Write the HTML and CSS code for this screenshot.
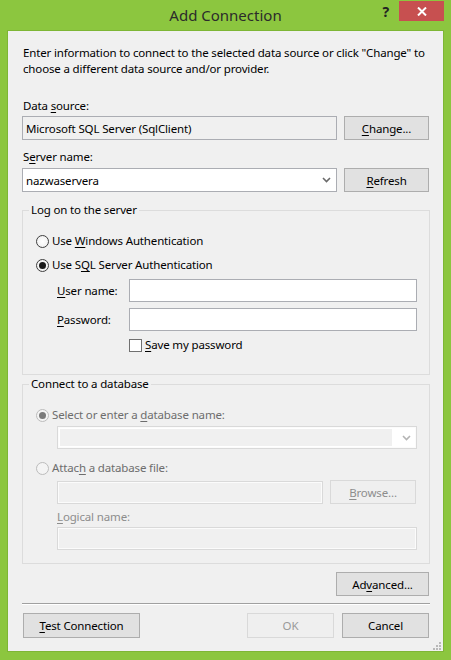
FILE: index.html
```html
<!DOCTYPE html>
<html>
<head>
<meta charset="utf-8">
<title>Add Connection</title>
<link rel="stylesheet" href="styles.css">
</head>
<body>
<div class="window">
  <div class="titlebar">
    <div class="title">Add Connection</div>
    <div class="help">?</div>
    <div class="close"><svg width="10" height="9" viewBox="0 0 10 9"><path d="M1 0.5 L9 8.5 M9 0.5 L1 8.5" stroke="#fff" stroke-width="2"/></svg></div>
  </div>
  <div class="client">
    <p class="intro">Enter information to connect to the selected data source or click "Change" to choose a different data source and/or provider.</p>

    <div class="label first">Data <u>s</u>ource:</div>
    <div class="row">
      <div class="field readonly">Microsoft SQL Server (SqlClient)</div>
      <div class="btn"><span><u>C</u>hange...</span></div>
    </div>

    <div class="label">S<u>e</u>rver name:</div>
    <div class="row">
      <div class="field combo"><span>nazwaservera</span><svg class="chev" width="9" height="6" viewBox="0 0 9 6"><path d="M1 1 L4.5 4.5 L8 1" fill="none" stroke="#6a6a6a" stroke-width="1.6"/></svg></div>
      <div class="btn"><span><u>R</u>efresh</span></div>
    </div>

    <fieldset class="group g1">
      <legend>Log on to the server</legend>
      <div class="opt o1"><span class="radio"></span><span>Use <u>W</u>indows Authentication</span></div>
      <div class="opt o2"><span class="radio on"></span><span>Use S<u>Q</u>L Server Authentication</span></div>
      <div class="creds">
        <div class="clabel"><u>U</u>ser name:</div>
        <div class="field"></div>
        <div class="clabel"><u>P</u>assword:</div>
        <div class="field"></div>
      </div>
      <div class="check"><span class="box"></span><span><u>S</u>ave my password</span></div>
    </fieldset>

    <fieldset class="group g2">
      <legend>Connect to a database</legend>
      <div class="opt o3 dis"><span class="radio on dis"></span><span>Select or enter a <u>d</u>atabase name:</span></div>
      <div class="field dfield dcombo"><span class="dinner"></span><svg class="chev" width="9" height="6" viewBox="0 0 9 6"><path d="M1 1 L4.5 4.5 L8 1" fill="none" stroke="#b4b4b4" stroke-width="1.6"/></svg></div>
      <div class="opt o4 dis"><span class="radio dis"></span><span>Attac<u>h</u> a database file:</span></div>
      <div class="filerow">
        <div class="field dfield"></div>
        <div class="btn dbtn"><span><u>B</u>rowse...</span></div>
      </div>
      <div class="llabel"><u>L</u>ogical name:</div>
      <div class="field dfield lfield"></div>
    </fieldset>

    <div class="advrow"><div class="btn adv"><span>Ad<u>v</u>anced...</span></div></div>
    <div class="sep"></div>
    <div class="bottom">
      <div class="btn test"><span><u>T</u>est Connection</span></div>
      <div class="spacer"></div>
      <div class="btn ok dbtn">OK</div>
      <div class="btn cancel">Cancel</div>
    </div>
    <svg class="grip" width="10" height="10" viewBox="0 0 10 10"><g fill="#b9b9b9"><rect x="7" y="1" width="2" height="2"/><rect x="4" y="4" width="2" height="2"/><rect x="7" y="4" width="2" height="2"/><rect x="1" y="7" width="2" height="2"/><rect x="4" y="7" width="2" height="2"/><rect x="7" y="7" width="2" height="2"/></g></svg>
  </div>
</div>
</body>
</html>
```

FILE: styles.css
```css
* { box-sizing: border-box; }
html, body { margin: 0; padding: 0; }
body {
  font-family: "Noto Sans", "Open Sans", "DejaVu Sans", sans-serif;
  font-size: 11.5px;
  letter-spacing: -0.15px;
  color: #000;
  background: #8cc63f;
}
u { text-decoration: underline; text-underline-offset: 2px; text-decoration-thickness: 1px; }

.window {
  width: 451px;
  height: 660px;
  background: #8cc63f;
  display: flex;
  flex-direction: column;
  padding: 0 8px 9px;
}

.titlebar {
  height: 31px;
  flex: none;
  display: grid;
  grid-template-columns: 1fr auto auto;
  align-items: start;
}
.title {
  grid-column: 1 / -1;
  grid-row: 1;
  text-align: center;
  font-size: 15px;
  letter-spacing: 0;
  line-height: 30px;
  color: #2b2b2b;
}
.help {
  grid-column: 2;
  grid-row: 1;
  font-weight: bold;
  font-size: 14px;
  line-height: 24px;
  color: #222;
  margin-right: 10px;
}
.close {
  grid-column: 3;
  grid-row: 1;
  width: 45px;
  height: 20px;
  margin-top: 1px;
  margin-right: -1px;
  background: #c75050;
  display: flex;
  align-items: center;
  justify-content: center;
}

.client {
  flex: 1;
  position: relative;
  background: #f0f0f0;
  box-shadow: 0 0 0 1px #7eb635;
  padding: 14px 14px 0;
  display: flex;
  flex-direction: column;
}

.intro {
  margin: 0 0 0 1px;
  line-height: 16px;
}

.label {
  line-height: 16px;
  margin: 9px 0 3px 1px;
}
.label.first { margin-top: 21px; margin-bottom: 2px; }

.row {
  display: grid;
  grid-template-columns: 315px 85px;
  column-gap: 7px;
  height: 24px;
}

.field {
  height: 100%;
  border: 1px solid #abadb3;
  background: #fff;
  padding: 0 3px;
  display: flex;
  align-items: center;
  white-space: nowrap;
}
.field.readonly { background: #f0f0f0; }
.combo { justify-content: space-between; padding-right: 5px; }

.btn {
  border: 1px solid #adadad;
  background: #e1e1e1;
  display: flex;
  align-items: center;
  justify-content: center;
  white-space: nowrap;
}
.dbtn {
  border-color: #d9d9d9;
  background: #efefef;
  color: #9a9a9a;
}

.group {
  margin: 10px 0 0;
  padding: 0 12px 0 13px;
  border: 1px solid #dcdcdc;
  border-radius: 0;
  min-width: 0;
  margin-right: -1px;
}
.group legend {
  line-height: 16px;
  padding: 0 2px;
  margin-left: -7px;
}
.g1 { padding-bottom: 21px; }
.g2 { margin-top: 1px; padding-bottom: 13px; }

.opt {
  display: flex;
  align-items: center;
  line-height: 16px;
  white-space: nowrap;
}
.o1 { margin-top: 15px; }
.o2 { margin-top: 8px; }
.o3 { margin-top: 15px; }
.o4 { margin-top: 11px; }
.dis { color: #6d6d6d; }

.radio {
  width: 13px;
  height: 13px;
  border-radius: 50%;
  border: 1px solid #3f3f3f;
  background: radial-gradient(circle, #ffffff 0%, #f4f4f4 60%, #e6e6e6 100%);
  margin-right: 3px;
  display: flex;
  align-items: center;
  justify-content: center;
  flex: none;
}
.radio.on::after {
  content: "";
  width: 7px;
  height: 7px;
  border-radius: 50%;
  background: #1a1a1a;
}
.radio.dis {
  border-color: #bcbcbc;
  background: #f4f4f4;
}
.radio.on.dis::after { background: #7a7a7a; }

.creds {
  display: grid;
  grid-template-columns: 72px 1fr;
  grid-auto-rows: 23px;
  row-gap: 6px;
  margin: 6px 0 0 21px;
  align-items: center;
}
.clabel { line-height: 16px; white-space: nowrap; }

.check {
  display: flex;
  align-items: center;
  line-height: 16px;
  margin: 6px 0 0 93px;
}
.check .box {
  width: 13px;
  height: 13px;
  border: 1px solid #707070;
  background: #fff;
  margin-right: 3px;
  flex: none;
}

.dfield {
  border-color: #d9d9d9;
  background: #f0f0f0;
  box-shadow: inset 0 0 0 1px #fbfbfb;
}
.dcombo {
  margin: 3px 0 0 21px;
  height: 23px;
  padding: 2px 5px 2px 2px;
  background: #fff;
  justify-content: space-between;
}
.dinner {
  flex: 1;
  height: 100%;
  background: #f0f0f0;
  margin-right: 10px;
}

.filerow {
  display: grid;
  grid-template-columns: 266px 86px;
  column-gap: 7px;
  height: 24px;
  margin: 4px 0 0 21px;
}
.filerow .field { height: 23px; margin-top: 1px; }
.llabel {
  line-height: 16px;
  margin: 5px 0 0 21px;
  color: #8d8d8d;
}
.filerow .dbtn { color: #8d8d8d; }
.lfield {
  margin: 2px 0 0 21px;
  height: 23px;
}

.advrow {
  display: flex;
  justify-content: flex-end;
  margin-top: 8px;
}
.adv { width: 93px; height: 24px; }

.sep {
  margin: 7px -1px 0 0;
  border-top: 1px solid #a0a0a0;
  border-bottom: 1px solid #fff;
}

.bottom {
  display: flex;
  margin-top: 8px;
  height: 25px;
  gap: 8px;
}
.test { width: 117px; margin-left: 1px; }
.spacer { flex: 1; }
.ok { width: 87px; }
.cancel { width: 87px; }

.grip {
  position: absolute;
  right: 1px;
  bottom: 0;
}
```
